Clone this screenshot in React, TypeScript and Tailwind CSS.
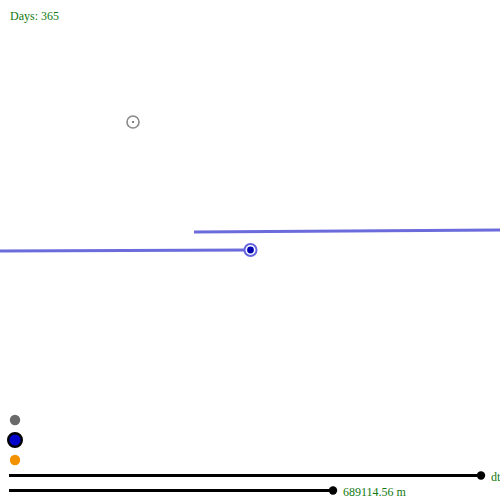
import React from "react";

export default function App() {
  return (
    <div className="relative w-[500px] h-[500px] bg-white overflow-hidden" style={{ fontFamily: '"Liberation Serif", "DejaVu Serif", serif' }}>
      <svg className="absolute left-0 top-0" width="500" height="500" viewBox="0 0 500 500">
        {/* gray point */}
        <circle cx="133" cy="122" r="6" fill="none" stroke="#8a8a8a" strokeWidth="1.6" />
        <circle cx="133" cy="122" r="1" fill="#555" />
        {/* lines */}
        <line x1="194" y1="232" x2="500" y2="230" stroke="#6b6bdc" strokeWidth="3" />
        <line x1="0" y1="251" x2="250" y2="250" stroke="#6b6bdc" strokeWidth="3" />
        <circle cx="250.5" cy="250" r="6" fill="white" stroke="#6464e0" strokeWidth="2" />
        <circle cx="250.5" cy="250" r="3.4" fill="#0000b0" />
        {/* legend points */}
        <circle cx="15" cy="420" r="5.2" fill="#6a6a6a" />
        <circle cx="15" cy="440" r="6.8" fill="#0000c8" stroke="#000" strokeWidth="2.4" />
        <circle cx="15" cy="460" r="5.2" fill="#f39200" />
        {/* sliders */}
        <line x1="9" y1="475.5" x2="481" y2="475.5" stroke="#000" strokeWidth="3" />
        <circle cx="481" cy="475.5" r="4.2" fill="#000" />
        <line x1="9" y1="490.5" x2="333" y2="490.5" stroke="#000" strokeWidth="3" />
        <circle cx="333" cy="490.5" r="4.2" fill="#000" />
      </svg>
      <div className="absolute left-[10px] top-[10px] text-[12px] leading-none text-[#107a10]">Days: 365</div>
      <div className="absolute left-[491px] top-[471px] text-[12px] leading-none text-[#107a10]">dt</div>
      <div className="absolute left-[343px] top-[486px] text-[12px] leading-none text-[#107a10]">689114.56 m</div>
    </div>
  );
}
